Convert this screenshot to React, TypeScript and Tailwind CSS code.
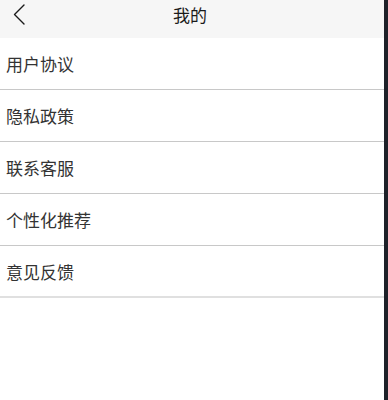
import React from "react";

const items = ["用户协议", "隐私政策", "联系客服", "个性化推荐", "意见反馈"];

export default function App() {
  return (
    <div
      className="flex h-[400px] w-[388px] bg-white"
      style={{ fontFamily: '"Noto Sans CJK SC", "Noto Sans", sans-serif' }}
    >
      <div className="flex w-[384px] flex-col">
        <div className="relative h-[38px] bg-[#f6f6f6]">
          <div className="flex h-[29px] items-center justify-center pr-[4px]">
            <span className="text-[17px] leading-none text-[#1a1a1a]">我的</span>
          </div>
          <svg
            className="absolute left-[12px] top-[3px]"
            width="16"
            height="24"
            viewBox="0 0 16 24"
            fill="none"
          >
            <polyline
              points="12,2 2.5,11.5 12,21"
              stroke="#1a1a1a"
              strokeWidth="1.4"
              strokeLinecap="round"
              strokeLinejoin="round"
            />
          </svg>
        </div>
        {items.map((t, i) => (
          <div
            key={t}
            className={
              i === items.length - 1
                ? "flex h-[52px] items-center border-b-2 border-[#e0e0e0] pl-[6px]"
                : "flex h-[52px] items-center border-b border-[#c8c8c8] pl-[6px]"
            }
          >
            <span className="text-[17px] leading-none text-[#333333]">{t}</span>
          </div>
        ))}
      </div>
      <div className="h-full w-[4px] bg-[#1e2129]" />
    </div>
  );
}
